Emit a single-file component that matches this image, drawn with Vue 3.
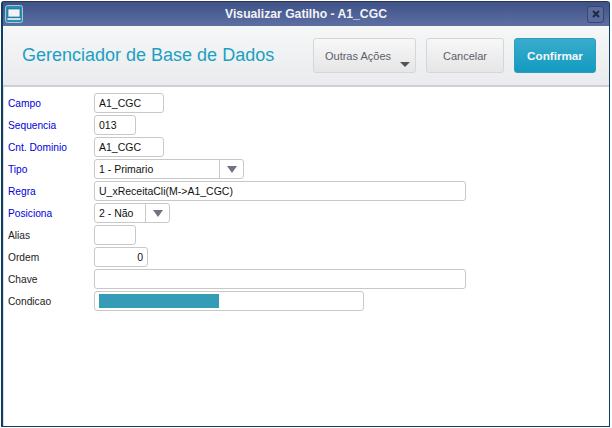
<script setup>
const rows = [
  { label: 'Campo', req: true, w: 70, text: 'A1_CGC' },
  { label: 'Sequencia', req: true, w: 42, text: '013' },
  { label: 'Cnt. Dominio', req: true, w: 70, text: 'A1_CGC' },
  { label: 'Tipo', req: true, w: 150, text: '1 - Primario', select: true },
  { label: 'Regra', req: false, blue: true, w: 372, text: 'U_xReceitaCli(M->A1_CGC)' },
  { label: 'Posiciona', req: true, w: 76, text: '2 - Não', select: true },
  { label: 'Alias', w: 42, text: '' },
  { label: 'Ordem', w: 54, text: '0', right: true },
  { label: 'Chave', w: 372, text: '' },
  { label: 'Condicao', w: 270, text: '', bar: true },
]
</script>

<template>
  <div class="desk">
    <div class="win">
      <div class="title">
        <span class="appicon">
          <svg width="18" height="18" viewBox="0 0 18 18">
            <rect x="0.5" y="0.5" width="17" height="17" rx="2" fill="#2a8fb0" stroke="#a9c6d6" />
            <rect x="3" y="4" width="12" height="8" fill="#eef3f5" stroke="#0f5f7f" stroke-width="0.6" />
            <rect x="2.5" y="13" width="13" height="2" fill="#cfe0e6" />
          </svg>
        </span>
        <span class="title-text">Visualizar Gatilho - A1_CGC</span>
        <span class="close">
          <svg width="8" height="8" viewBox="0 0 8 8">
            <path d="M1 1 7 7M7 1 1 7" stroke="#1f2a44" stroke-width="2" />
          </svg>
        </span>
      </div>
      <div class="head">
        <h1>Gerenciador de Base de Dados</h1>
        <div class="actions">
          <button class="btn more">Outras Ações<i class="caret"></i></button>
          <button class="btn cancel">Cancelar</button>
          <button class="btn ok">Confirmar</button>
        </div>
      </div>
      <div class="form">
        <div v-for="r in rows" :key="r.label" class="row">
          <label :class="{ req: r.req || r.blue }">{{ r.label }}</label>
          <div class="field" :class="{ right: r.right }" :style="{ width: r.w + 'px' }">
            <span v-if="r.bar" class="bar"></span>
            <span class="val">{{ r.text }}</span>
            <span v-if="r.select" class="arrow"><i></i></span>
          </div>
        </div>
      </div>
    </div>
  </div>
</template>

<style>
html, body { margin: 0; background: #fff; }
</style>

<style scoped>
.desk {
  width: 612px;
  height: 428px;
  box-sizing: border-box;
  padding: 1px 2px 0 1px;
  background: #fff;
  font-family: "Liberation Sans", Arial, sans-serif;
  overflow: hidden;
}
.win {
  height: 426px;
  box-sizing: border-box;
  border: 1px solid #0d3f68;
  border-left-width: 2px;
  border-top-color: #2b3550;
  border-radius: 3px 3px 0 0;
  display: flex;
  flex-direction: column;
  background: #fff;
}
.title {
  height: 24px;
  flex: none;
  display: flex;
  align-items: center;
  padding: 0 5px 0 2px;
  background: linear-gradient(#3f5287, #5d6fa3);
}
.appicon { width: 18px; height: 18px; display: block; }
.appicon svg { display: block; }
.title-text {
  flex: 1;
  text-align: center;
  color: #f2f4f8;
  font-size: 12.2px;
  font-weight: bold;
  padding-left: 2px;
}
.close {
  width: 15px;
  height: 15px;
  border: 1px solid #36466f;
  border-radius: 3px;
  display: flex;
  align-items: center;
  justify-content: center;
  background: #5a6b9c;
}
.head {
  height: 59px;
  flex: none;
  display: flex;
  align-items: center;
  justify-content: space-between;
  padding: 0 13px 0 19px;
  background: linear-gradient(#f6f7f7, #e9ebee);
  border-bottom: 2px solid #cfcfcf;
}
h1 {
  margin: 0;
  font-size: 18px;
  font-weight: normal;
  color: #1ba0c4;
}
.actions { display: flex; gap: 10px; }
.btn {
  height: 35px;
  box-sizing: border-box;
  border: 1px solid #d6d6d6;
  border-radius: 3px;
  background: linear-gradient(#f7f7f7, #e6e6e6);
  color: #5a5f6b;
  font-family: inherit;
  font-size: 11px;
  padding: 0;
}
.more { width: 103px; position: relative; padding-right: 13px; }
.caret {
  position: absolute;
  right: 5px;
  bottom: 5px;
  width: 0;
  height: 0;
  border-left: 5px solid transparent;
  border-right: 5px solid transparent;
  border-top: 5px solid #50535c;
}
.cancel { width: 78px; }
.ok {
  width: 82px;
  border-color: #2b9dc0;
  background: linear-gradient(#3aaccc, #129ac0);
  color: #f2f8fa;
  font-weight: bold;
  font-size: 11.7px;
}
.form {
  flex: 1;
  padding: 6px 0 0 3px;
  display: flex;
  flex-direction: column;
  gap: 2px;
  border-left: 1px solid #dcdcdc;
}
.row { display: flex; align-items: center; height: 20px; }
label {
  width: 86px;
  padding-left: 1px;
  flex: none;
  font-size: 10.2px;
  color: #222;
}
label.req { color: #0000e0; }
.field {
  height: 20px;
  box-sizing: border-box;
  border: 1px solid #c8c8c8;
  border-radius: 3px;
  display: flex;
  align-items: center;
  padding: 0 4px;
  font-size: 10.5px;
  color: #111;
  position: relative;
}
.field.right { justify-content: flex-end; }
.arrow {
  position: absolute;
  right: 0;
  top: 0;
  bottom: 0;
  width: 23px;
  border-left: 1px solid #c8c8c8;
  display: flex;
  align-items: center;
  justify-content: center;
}
.arrow i {
  width: 0;
  height: 0;
  border-left: 5px solid transparent;
  border-right: 5px solid transparent;
  border-top: 7px solid #70747e;
}
.bar {
  width: 120px;
  height: 14px;
  background: #359cb7;
}
</style>
